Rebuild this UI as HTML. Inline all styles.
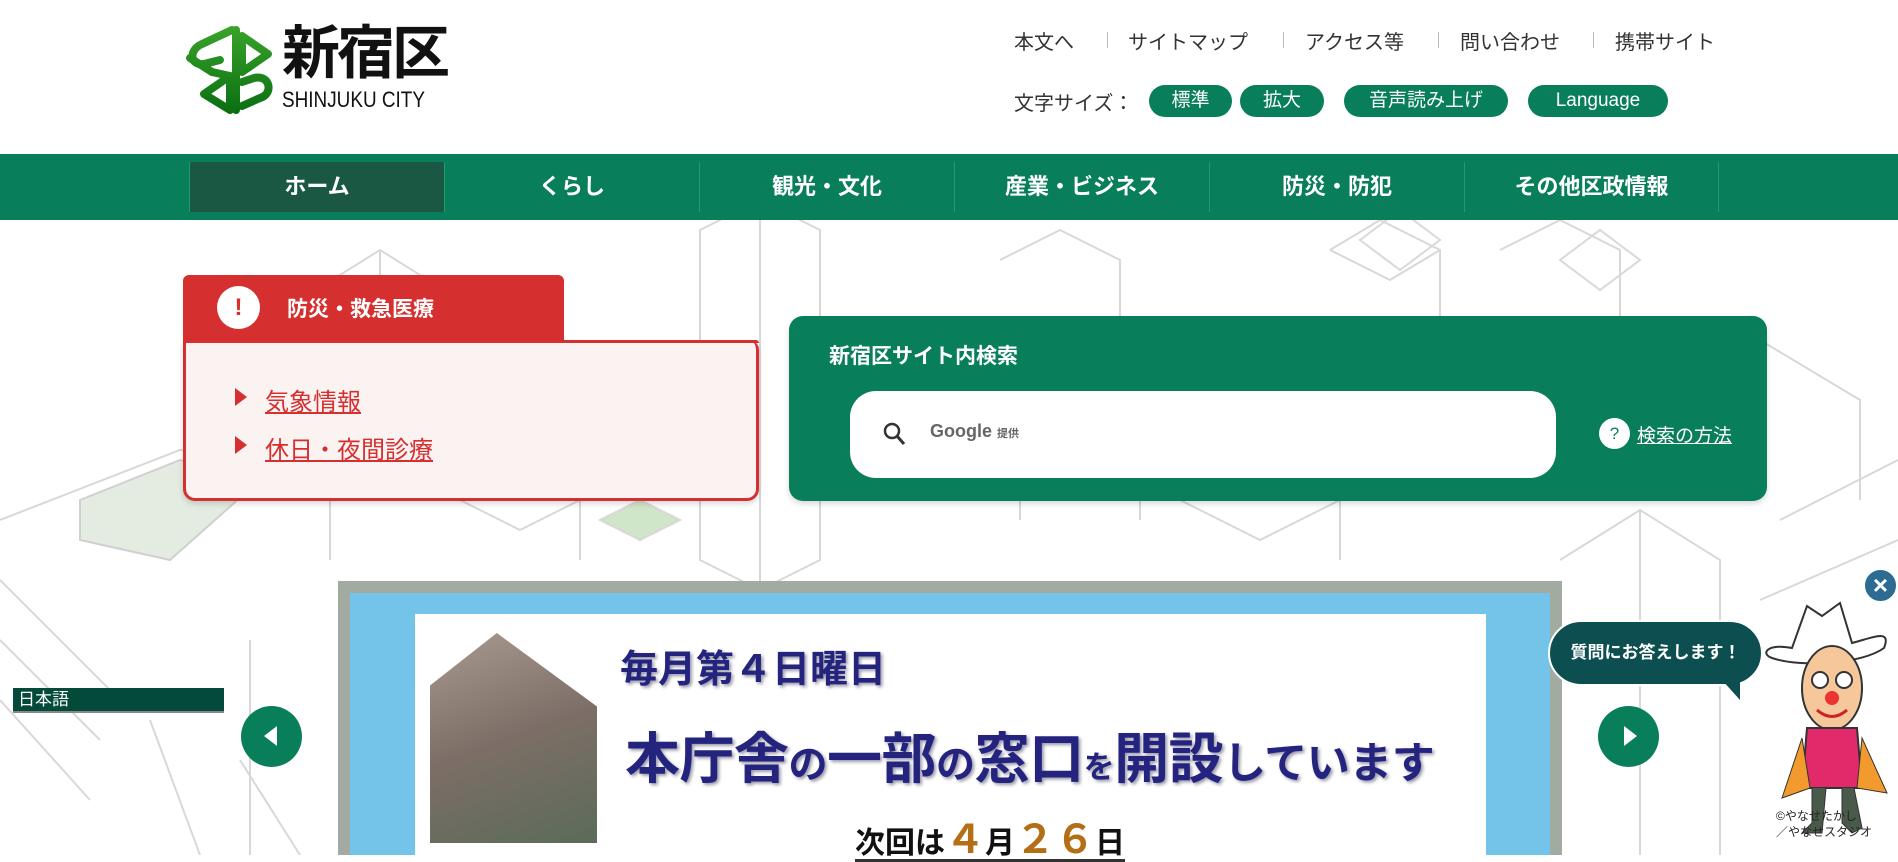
<!DOCTYPE html>
<html><head><meta charset="utf-8"><style>
*{margin:0;padding:0;box-sizing:border-box}
body{width:1898px;height:855px;overflow:hidden;background:#fff;font-family:"Liberation Sans","Noto Sans CJK JP",sans-serif;position:relative;color:#222}
.abs{position:absolute}
#bg{position:absolute;left:0;top:0}
.tl{position:absolute;top:26px;font-size:20px;color:#333}
.sep{position:absolute;top:32px;width:1px;height:16px;background:#bbb}
.btn{position:absolute;top:85px;height:32px;border-radius:16px;background:#087e5a;color:#fff;font-size:19px;text-align:center;line-height:32px}
.nav{position:absolute;left:0;top:154px;width:1898px;height:66px;background:#087e5a}
.ni{position:absolute;top:8px;height:50px;width:255px;color:#fff;font-weight:bold;font-size:22px;text-align:center;line-height:50px;border-left:1px solid #1f9c72}
.circ{position:absolute;border-radius:50%;background:#087e5a}
</style></head><body>
<svg id="bg" width="1898" height="855" fill="none" stroke="#d8d8d8" stroke-width="2">
<path d="M300 300 L380 250 L460 300 L460 420 L380 470 L300 420Z M380 250 L380 470"/>
<path d="M700 230 L760 200 L820 230 L820 560 L760 590 L700 560Z M760 200 L760 590"/>
<path d="M1000 260 L1060 230 L1120 260 L1120 330"/>
<path d="M1330 250 L1380 220 L1440 250 L1440 330 M1330 250 L1390 280 L1440 250"/>
<path d="M1360 240 L1400 210 L1440 240 L1400 270Z"/>
<path d="M1500 250 L1560 220 L1620 250 L1620 330"/>
<path d="M1560 260 L1600 230 L1640 260 L1600 290Z"/>
<path d="M0 520 L180 450 L330 460 L330 560"/>
<path d="M80 500 L180 460 L260 480 L170 560 L80 540Z" fill="#e4ece2" stroke="#d0d0d0"/>
<path d="M0 580 L120 700 M0 640 L100 740 M0 700 L90 800 M240 760 L300 855"/>
<path d="M1560 560 L1640 510 L1720 560 L1720 855 M1640 510 L1640 855"/>
<path d="M1780 520 L1898 460 M1760 600 L1898 540"/>
<path d="M460 500 L520 470 L580 500 L580 560 M460 500 L520 530 L580 500"/>
<path d="M600 520 L640 500 L680 520 L640 540Z" fill="#cfe6c8"/>
<path d="M1180 500 L1260 460 L1340 500 L1340 560 M1180 500 L1260 540 L1340 500"/>
<path d="M1460 420 L1540 380 L1620 420 M1660 400 L1760 340 L1860 400 L1860 500"/>
<path d="M1020 450 L1020 520 M1140 450 L1140 520"/>
<path d="M150 720 L200 855 M250 640 L250 855"/>
</svg>

<!-- logo -->
<svg class="abs" style="left:182px;top:24px" width="92" height="90" viewBox="0 0 92 90">
<defs><linearGradient id="g" gradientUnits="userSpaceOnUse" x1="0" y1="0" x2="0" y2="90"><stop offset="0" stop-color="#3aa52a"/><stop offset="1" stop-color="#0a6e12"/></linearGradient></defs>
<g fill="none" stroke="url(#g)" stroke-width="8" stroke-linejoin="round" stroke-linecap="round">
<path d="M50 6 L20 20 C6 26 8 42 22 40 L38 36"/>
<path d="M54 6 L54 86"/>
<path d="M60 12 L86 30 L60 48Z"/>
<path d="M30 48 L8 34"/>
<path d="M48 52 L22 70 L48 86Z"/>
<path d="M60 58 L72 54 C88 50 92 70 78 74 L60 82"/>
<path d="M30 48 L48 52"/>
</g>
</svg>
<div class="abs" style="left:282px;top:22px;font-size:58px;font-weight:bold;color:#111;letter-spacing:-3px;line-height:64px">新宿区</div>
<div class="abs" style="left:282px;top:88px;font-size:22px;color:#111;letter-spacing:0;line-height:24px;transform:scaleX(.86);transform-origin:left">SHINJUKU CITY</div>

<div class="tl" style="left:1014px">本文へ</div><div class="sep" style="left:1107px"></div>
<div class="tl" style="left:1128px">サイトマップ</div><div class="sep" style="left:1283px"></div>
<div class="tl" style="left:1305px">アクセス等</div><div class="sep" style="left:1438px"></div>
<div class="tl" style="left:1460px">問い合わせ</div><div class="sep" style="left:1593px"></div>
<div class="tl" style="left:1615px">携帯サイト</div>
<div class="tl" style="left:1014px;top:87px">文字サイズ：</div>
<div class="btn" style="left:1149px;width:83px">標準</div>
<div class="btn" style="left:1240px;width:84px">拡大</div>
<div class="btn" style="left:1344px;width:164px">音声読み上げ</div>
<div class="btn" style="left:1528px;width:140px">Language</div>

<div class="nav">
<div class="ni" style="left:189px;background:#1a5844">ホーム</div>
<div class="ni" style="left:444px">くらし</div>
<div class="ni" style="left:699px">観光・文化</div>
<div class="ni" style="left:954px">産業・ビジネス</div>
<div class="ni" style="left:1209px">防災・防犯</div>
<div class="ni" style="left:1464px;border-right:1px solid #1f9c72">その他区政情報</div>
</div>

<!-- red panel -->
<div class="abs" style="left:183px;top:275px;width:381px;height:66px;background:#d52f2f;border-radius:6px 6px 0 0"></div>
<div class="abs" style="left:217px;top:286px;width:43px;height:43px;border-radius:50%;background:#fff;color:#d52f2f;font-weight:bold;font-size:24px;text-align:center;line-height:43px">!</div>
<div class="abs" style="left:287px;top:293px;color:#fff;font-weight:bold;font-size:21px">防災・救急医療</div>
<div class="abs" style="left:183px;top:340px;width:576px;height:161px;background:#fbf2f2;border:3px solid #d52f2f;border-top:none;border-radius:0 10px 12px 12px;box-shadow:0 3px 6px rgba(0,0,0,.15)"></div>
<div class="abs" style="left:183px;top:340px;width:576px;height:3px;background:#d52f2f;border-radius:0 10px 0 0"></div>
<div class="abs" style="left:235px;top:388px;width:0;height:0;border-left:12px solid #d52f2f;border-top:9px solid transparent;border-bottom:9px solid transparent"></div>
<div class="abs" style="left:265px;top:382px;color:#d52f2f;font-size:24px;text-decoration:underline">気象情報</div>
<div class="abs" style="left:235px;top:436px;width:0;height:0;border-left:12px solid #d52f2f;border-top:9px solid transparent;border-bottom:9px solid transparent"></div>
<div class="abs" style="left:265px;top:430px;color:#d52f2f;font-size:24px;text-decoration:underline">休日・夜間診療</div>

<!-- search -->
<div class="abs" style="left:789px;top:316px;width:978px;height:185px;background:#087e5a;border-radius:14px;box-shadow:0 3px 6px rgba(0,0,0,.15)"></div>
<div class="abs" style="left:829px;top:340px;color:#fff;font-weight:bold;font-size:21px">新宿区サイト内検索</div>
<div class="abs" style="left:850px;top:391px;width:706px;height:87px;background:#fff;border-radius:26px"></div>
<svg class="abs" style="left:882px;top:421px" width="26" height="28"><circle cx="10" cy="10" r="7" stroke="#333" stroke-width="2.5" fill="none"/><path d="M15 15 L22 23" stroke="#333" stroke-width="3"/></svg>
<div class="abs" style="left:930px;top:421px;color:#666;font-size:18px;font-weight:bold">Google <span style="font-size:11px">提供</span></div>
<div class="abs" style="left:1599px;top:418px;width:31px;height:31px;border-radius:50%;background:#fff;color:#087e5a;text-align:center;line-height:31px;font-size:17px">?</div>
<div class="abs" style="left:1637px;top:421px;color:#fff;font-size:19px;text-decoration:underline">検索の方法</div>

<!-- banner -->
<div class="abs" style="left:338px;top:581px;width:1224px;height:274px;background:#a2aba2"></div>
<div class="abs" style="left:350px;top:593px;width:1200px;height:262px;background:#74c4ea"></div>
<div class="abs" style="left:415px;top:614px;width:1071px;height:241px;background:#fff"></div>
<div class="abs" style="left:430px;top:633px;width:167px;height:210px;background:linear-gradient(160deg,#a89a90,#7c6e66 50%,#5b6b5a);clip-path:polygon(0 25%,40% 0,100% 35%,100% 100%,0 100%)"></div>
<div class="abs" style="left:620px;top:638px;color:#24237e;font-weight:bold;font-size:38px;text-shadow:2px 2px 3px #99a">毎月第４日曜日</div>
<div class="abs" style="left:625px;top:714px;color:#24237e;font-weight:bold;font-size:55px;letter-spacing:-0.5px;text-shadow:2px 2px 3px #99a">本庁舎<span style="font-size:39px">の</span>一部<span style="font-size:39px">の</span>窓口<span style="font-size:31px">を</span>開設<span style="font-size:43px">しています</span></div>
<div class="abs" style="left:855px;top:825px;font-weight:bold;font-size:30px;color:#111;border-bottom:3px solid #333;line-height:30px">次回は<span style="color:#b46e16;font-size:40px">４</span>月<span style="color:#b46e16;font-size:40px">２６</span>日</div>

<!-- arrows -->
<div class="circ" style="left:241px;top:706px;width:61px;height:61px"></div>
<div class="abs" style="left:264px;top:726px;border-right:13px solid #fff;border-top:10px solid transparent;border-bottom:10px solid transparent"></div>
<div class="circ" style="left:1598px;top:706px;width:61px;height:61px"></div>
<div class="abs" style="left:1624px;top:726px;border-left:13px solid #fff;border-top:10px solid transparent;border-bottom:10px solid transparent"></div>

<div class="abs" style="left:13px;top:688px;width:211px;height:25px;background:#034a3a;border-bottom:2px solid #888;color:#fff;font-size:17px;line-height:23px;padding-left:5px">日本語</div>

<!-- chatbot -->
<div class="abs" style="left:1863px;top:568px;width:35px;height:35px;border-radius:50%;background:#2e6b93;border:2px solid #fff;color:#fff;font-size:26px;text-align:center;line-height:30px;font-weight:bold">×</div>
<div class="abs" style="left:1548px;top:620px;width:215px;height:66px;border-radius:33px;background:#0d4e50;border:2px solid #fff;color:#fff;font-weight:bold;font-size:17px;text-align:center;line-height:62px">質問にお答えします！</div>
<div class="abs" style="left:1722px;top:680px;border-top:20px solid #0d4e50;border-left:18px solid transparent"></div>
<svg class="abs" style="left:1762px;top:598px" width="136" height="240">
<path d="M30 50 L45 8 L60 18 L78 5 L90 45 C110 40 130 30 122 50 C100 66 40 70 10 60 C-2 56 5 45 30 50Z" fill="#fff" stroke="#333" stroke-width="2"/>
<ellipse cx="70" cy="90" rx="30" ry="42" fill="#f5c79b" stroke="#333" stroke-width="2"/>
<circle cx="58" cy="82" r="8" fill="#fff" stroke="#333" stroke-width="2"/><circle cx="82" cy="82" r="8" fill="#fff" stroke="#333" stroke-width="2"/>
<circle cx="70" cy="100" r="7" fill="#e33"/>
<path d="M55 112 Q70 125 85 112" stroke="#c22" stroke-width="3" fill="none"/>
<path d="M45 130 L95 130 L100 190 L40 190Z" fill="#e22a6b" stroke="#333" stroke-width="2"/>
<path d="M40 140 L20 200 L48 190Z M100 140 L125 195 L95 190Z" fill="#f29a2e" stroke="#333"/>
<path d="M50 190 L50 225 L40 235 L60 235 L64 190 M80 190 L80 225 L90 235 L100 230 L92 190" fill="#4a5a4a" stroke="#333"/>
</svg>
<div class="abs" style="left:1776px;top:808px;font-size:12px;color:#222;line-height:16px">©やなせたかし<br>／やなせスタジオ</div>
</body></html>
